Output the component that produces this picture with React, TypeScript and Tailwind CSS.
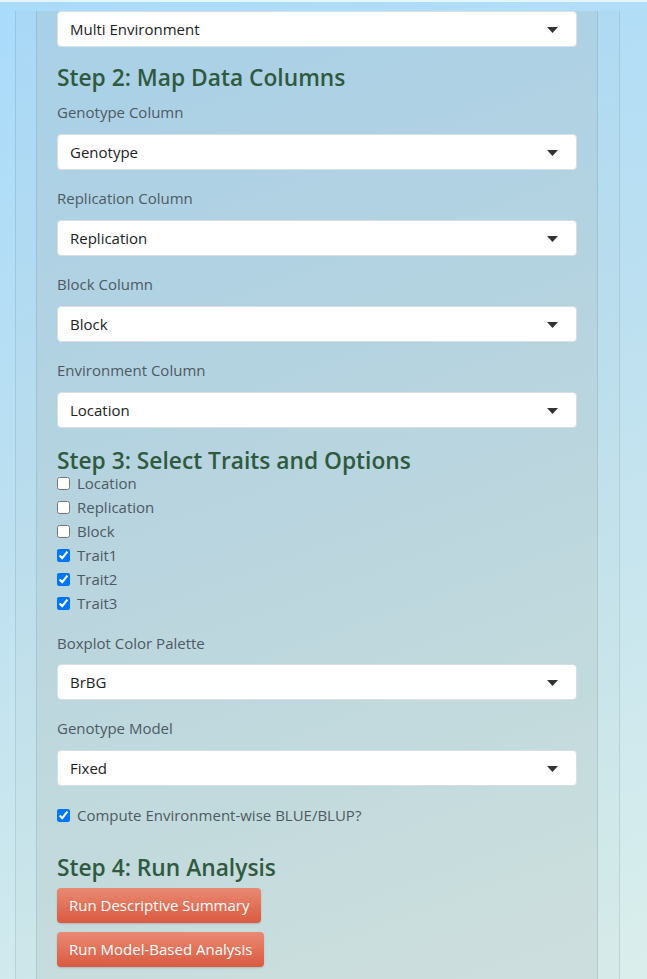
import { useState } from "react";

const font = { fontFamily: '"Open Sans", "Noto Sans", sans-serif' };

function Select({ value, className = "" }: { value: string; className?: string }) {
  return (
    <div
      className={`relative flex h-[36px] items-center rounded-[4px] border border-[#d9dee2] bg-white pl-[12px] text-[15px] text-[#222] ${className}`}
    >
      <span>{value}</span>
      <svg className="absolute right-[18px] top-[15px]" width="11" height="6" viewBox="0 0 11 6">
        <path d="M0 0 L11 0 L5.5 6 Z" fill="#333" />
      </svg>
    </div>
  );
}

function Label({ text, className = "" }: { text: string; className?: string }) {
  return <div className={`text-[15px] leading-[21px] text-[#4e5a62] ${className}`}>{text}</div>;
}

function Heading({ text, className = "" }: { text: string; className?: string }) {
  return <h3 className={`text-[22.75px] font-semibold leading-[20px] text-[#2f5a40] ${className}`}>{text}</h3>;
}

function Check({ label, init }: { label: string; init: boolean }) {
  const [checked, setChecked] = useState(init);
  return (
    <label className="flex h-[24px] items-center gap-[7px] text-[15px] text-[#4e5a62]">
      <input type="checkbox" checked={checked} onChange={() => setChecked(!checked)} className="m-0 h-[13px] w-[13px]" />
      {label}
    </label>
  );
}

export default function App() {
  const traits = [
    { name: "Location", on: false },
    { name: "Replication", on: false },
    { name: "Block", on: false },
    { name: "Trait1", on: true },
    { name: "Trait2", on: true },
    { name: "Trait3", on: true },
  ];

  return (
    <div
      style={font}
      className="min-h-[979px] w-full bg-[linear-gradient(160deg,#a9dbfb_0%,#bde0f0_45%,#dbefec_100%)]"
    >
      <div className="h-[2px] bg-white/70" />
      <div className="ml-[15px] w-[605px] border-x border-[rgba(40,90,120,0.14)] bg-[rgba(150,170,170,0.05)] pl-[20px] pr-[21px]">
        <div className="min-h-[977px] border-x border-[rgba(40,90,120,0.14)] bg-[rgba(165,172,165,0.18)] px-[20px] pb-[10px]">
          <Select value="Multi Environment" className="mt-[9px]" />

          <Heading text="Step 2: Map Data Columns" className="mt-[21px]" />
          <Label text="Genotype Column" className="mt-[14px]" />
          <Select value="Genotype" className="mt-[11px]" />
          <Label text="Replication Column" className="mt-[18px]" />
          <Select value="Replication" className="mt-[11px]" />
          <Label text="Block Column" className="mt-[18px]" />
          <Select value="Block" className="mt-[11px]" />
          <Label text="Environment Column" className="mt-[18px]" />
          <Select value="Location" className="mt-[11px]" />

          <Heading text="Step 3: Select Traits and Options" className="mt-[23px]" />
          <div className="flex flex-col">
            {traits.map((t) => (
              <Check key={t.name} label={t.name} init={t.on} />
            ))}
          </div>

          <Label text="Boxplot Color Palette" className="mt-[18px]" />
          <Select value="BrBG" className="mt-[10px]" />
          <Label text="Genotype Model" className="mt-[18px]" />
          <Select value="Fixed" className="mt-[11px]" />

          <div className="mt-[17px]">
            <Check label="Compute Environment-wise BLUE/BLUP?" init={true} />
          </div>

          <Heading text="Step 4: Run Analysis" className="mt-[31px]" />
          <div className="mt-[10px] flex flex-col items-start gap-[9px]">
            <button className="h-[35px] rounded-[4px] bg-[linear-gradient(180deg,#e98a73_0%,#d95a40_100%)] px-[12px] text-[15px] text-white shadow-[0_1px_2px_rgba(0,0,0,0.15)]">
              Run Descriptive Summary
            </button>
            <button className="h-[35px] rounded-[4px] bg-[linear-gradient(180deg,#e98a73_0%,#d95a40_100%)] px-[12px] text-[15px] text-white shadow-[0_1px_2px_rgba(0,0,0,0.15)]">
              Run Model-Based Analysis
            </button>
          </div>
        </div>
      </div>
    </div>
  );
}
